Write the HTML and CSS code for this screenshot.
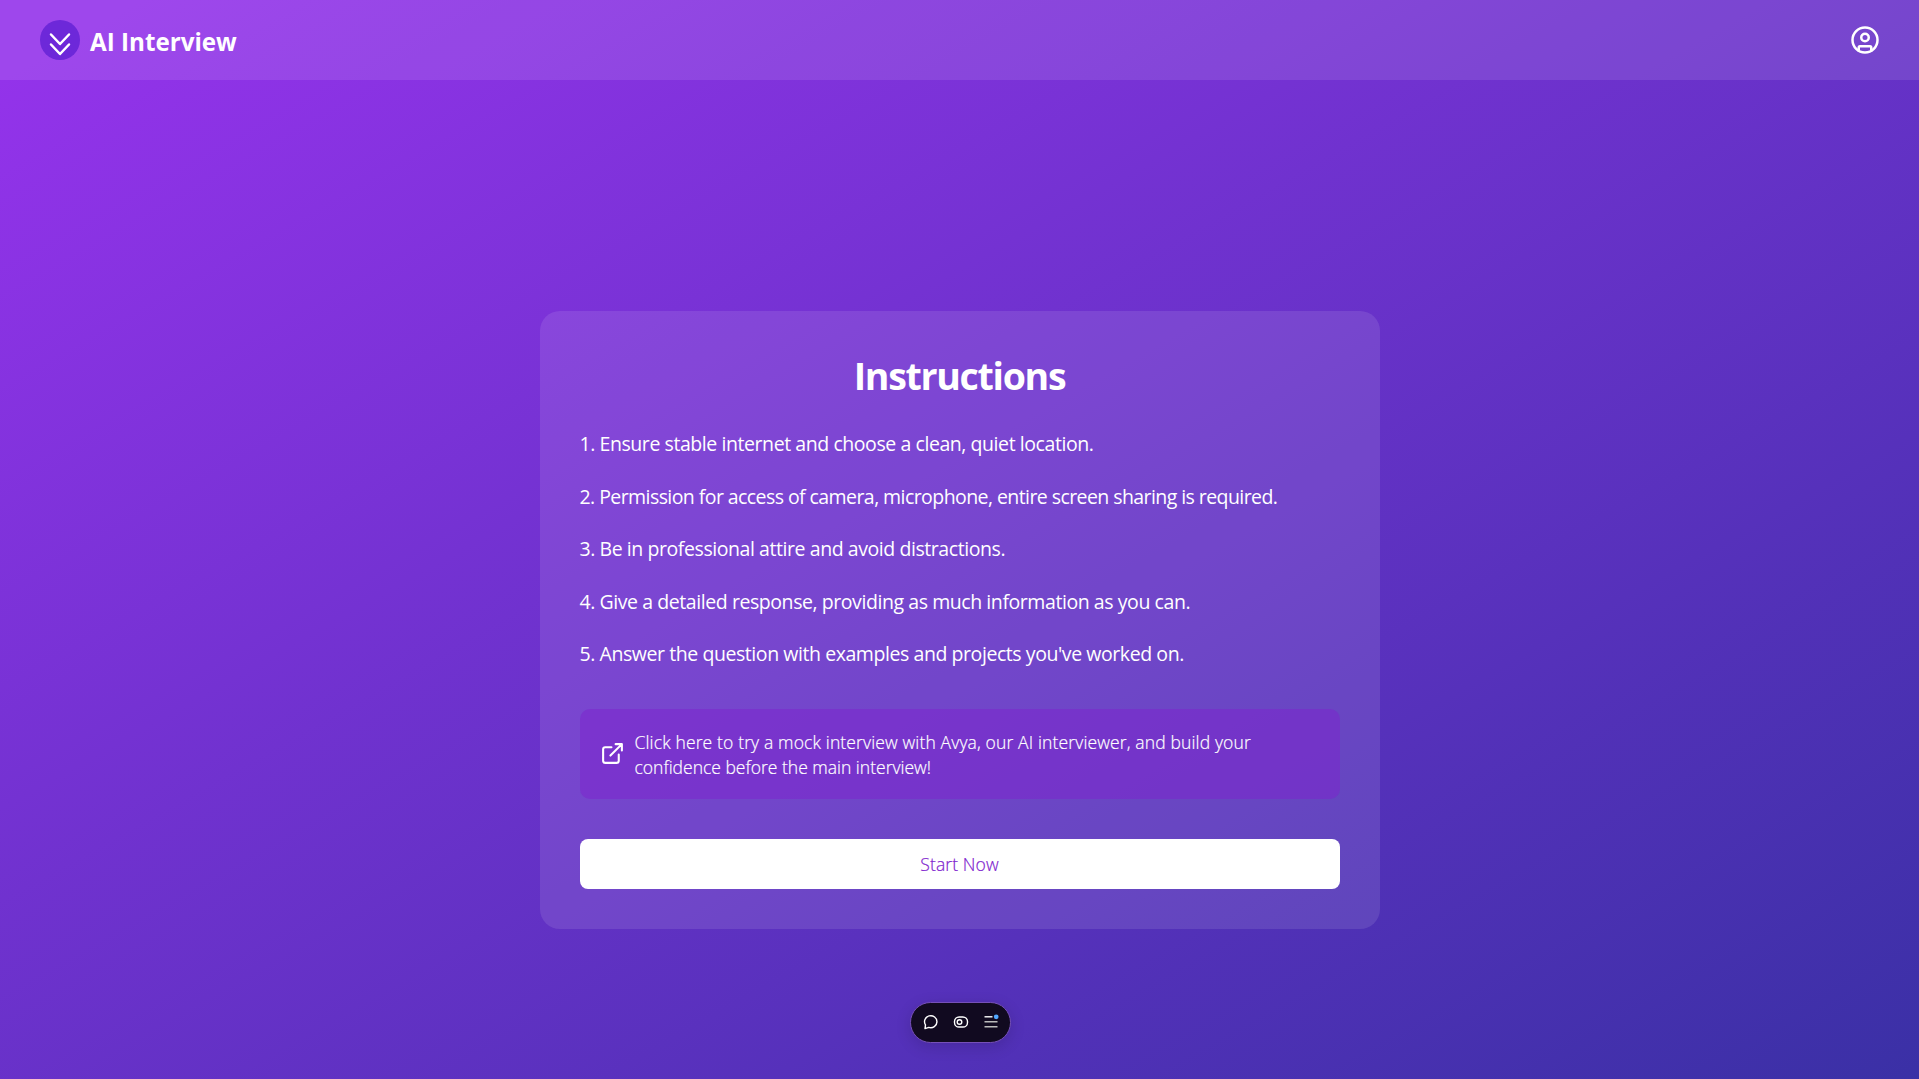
FILE: index.html
```html
<!DOCTYPE html>
<html lang="en">
<head>
<meta charset="utf-8">
<title>AI Interview</title>
<link rel="stylesheet" href="styles.css">
</head>
<body>
<div class="page">
  <header class="header">
    <div class="brand">
      <svg class="logo" viewBox="0 0 40 40" fill="none">
        <circle cx="20" cy="20" r="20" fill="#6d28d9"/>
        <path d="M11 14.5l9 9.5 9-9.5M11 24.5l9 9.5 9-9.5" stroke="#fff" stroke-width="2.5" stroke-linecap="round" stroke-linejoin="round"/>
      </svg>
      <span class="brand-name">AI Interview</span>
    </div>
    <svg class="user" viewBox="0 0 24 24" fill="none" stroke="#fff" stroke-width="2" stroke-linecap="round" stroke-linejoin="round">
      <circle cx="12" cy="12" r="10"/>
      <circle cx="12" cy="10" r="3"/>
      <path d="M7 20.662V18a1 1 0 0 1 1-1h8a1 1 0 0 1 1 1v2.662"/>
    </svg>
  </header>
  <main class="main">
    <section class="card">
      <h1 class="title">Instructions</h1>
      <div class="steps">
        <p class="step">1. Ensure stable internet and choose a clean, quiet location.</p>
        <p class="step step-long">2. Permission for access of camera, microphone, entire screen sharing is required.</p>
        <p class="step">3. Be in professional attire and avoid distractions.</p>
        <p class="step">4. Give a detailed response, providing as much information as you can.</p>
        <p class="step">5. Answer the question with examples and projects you've worked on.</p>
      </div>
      <a class="mock">
        <svg class="mock-icon" viewBox="0 0 24 24" fill="none" stroke="#fff" stroke-width="2" stroke-linecap="round" stroke-linejoin="round">
          <path d="M15 3h6v6M10 14L21 3M18 13v6a2 2 0 0 1-2 2H5a2 2 0 0 1-2-2V8a2 2 0 0 1 2-2h6"/>
        </svg>
        <span class="mock-text"><span class="mock-lead">Click here to try a mock interview with Avya, our AI interviewer, and build your</span><br>confidence before the main interview!</span>
      </a>
      <button class="start">Start Now</button>
    </section>
  </main>
</div>
<div class="toolbar">
  <svg viewBox="0 0 16 16" fill="none" stroke="#fff" stroke-width="1.4" stroke-linejoin="round">
    <path d="M2 14.6l.5-3.7A6.2 6 0 1 1 5.8 13.4z"/>
  </svg>
  <svg viewBox="0 0 16 16" fill="none" stroke="#fff" stroke-width="1.4">
    <rect x="1.5" y="3" width="13" height="10" rx="4.6"/>
    <circle cx="6.5" cy="8" r="2.3"/>
  </svg>
  <svg viewBox="0 0 16 16">
    <path d="M1.5 2.1h8v1.4h-8z" fill="#fff"/>
    <path d="M1.5 7h13v1.5h-13zM1.5 12h13v1.5h-13z" fill="#bbb"/>
    <circle cx="13.2" cy="2.8" r="2.4" fill="#52a8ff"/>
  </svg>
</div>
</body>
</html>
```

FILE: styles.css
```css
* { box-sizing: border-box; }
body {
  margin: 0;
  height: 100vh;
  overflow: hidden;
  color: #fff;
  font-family: "Open Sans", "Noto Sans", sans-serif;
}
.page {
  display: flex;
  flex-direction: column;
  height: 100vh;
  background: linear-gradient(150.65deg, #9333ea 3.7%, #3730a3 103.7%);
}
.header {
  display: flex;
  flex: none;
  align-items: center;
  justify-content: space-between;
  height: 80px;
  padding: 0 40px;
  background: rgba(255, 255, 255, 0.1);
}
.brand { display: flex; align-items: center; gap: 10px; }
.logo { width: 40px; height: 40px; }
.brand-name { font-size: 24.2px; font-weight: 700; line-height: 32px; padding-top: 3px; }
.user { width: 30px; height: 30px; margin-right: -1px; }
.main { flex: 1; display: flex; align-items: flex-start; justify-content: center; padding-top: 231px; }
.card {
  width: 840px;
  height: 618px;
  padding: 40px;
  border-radius: 20px;
  background: rgba(255, 255, 255, 0.1);
}
.title {
  margin: 0 0 28px;
  font-size: 37.5px;
  font-weight: 700;
  line-height: 50px;
  letter-spacing: -1.3px;
  text-align: center;
}
.steps { height: 280px; }
.step { margin: 0 0 22.5px; font-size: 19.5px; line-height: 30px; letter-spacing: -0.43px; white-space: nowrap; }
.step-long { letter-spacing: -0.57px; }
.mock {
  display: flex;
  align-items: center;
  gap: 10px;
  height: 90px;
  padding: 20px;
  border-radius: 10px;
  background: rgba(126, 34, 206, 0.5);
}
.mock-icon { flex: none; width: 25px; height: 25px; margin-top: -2px; }
.mock-text {
  padding-top: 2px;
  font-size: 17.5px;
  font-weight: 300;
  line-height: 25px;
  white-space: nowrap;
  -webkit-text-stroke: 0.2px #fff;
}
.mock-lead { letter-spacing: 0.14px; }
.start {
  display: block;
  width: 100%;
  height: 50px;
  margin-top: 40px;
  padding: 0;
  border: 0;
  border-radius: 8px;
  background: #fff;
  color: #7e22ce;
  font: 300 17.5px/50px "Open Sans", "Noto Sans", sans-serif;
  letter-spacing: 0.1px;
  -webkit-text-stroke: 0.2px #7e22ce;
}
.toolbar {
  position: absolute;
  left: 910px;
  top: 1002px;
  display: flex;
  align-items: center;
  justify-content: space-between;
  width: 101px;
  height: 41px;
  padding: 0 11px 1px 12px;
  border: 1px solid #7650b8;
  border-radius: 21px;
  background: #110a20;
  box-shadow: 0 4px 16px rgba(0, 0, 0, 0.14);
}
.toolbar svg { width: 16px; height: 16px; }
```
